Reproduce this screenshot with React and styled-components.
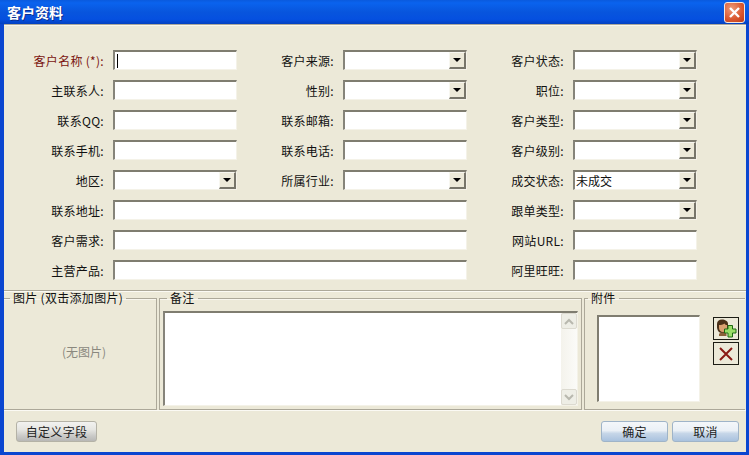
import styled, { createGlobalStyle } from "styled-components";

const GlobalStyle = createGlobalStyle`
  html, body { margin: 0; padding: 0; background: #ece9d8; }
  body { font-family: "Noto Sans CJK SC", "Liberation Sans", sans-serif; font-size: 12px; color: #222; }
`;

const Ventana = styled.div`
  width: 749px;
  height: 455px;
  box-sizing: border-box;
  display: flex;
  flex-direction: column;
  background: #0a46d0;
  padding: 0 3px 3px 4px;
  overflow: hidden;
`;

const BarraTitulo = styled.div`
  height: 24px;
  margin: 0 -3px 0 -4px;
  padding: 0 4px 0 7px;
  flex: none;
  display: flex;
  align-items: center;
  justify-content: space-between;
  background: linear-gradient(#0a5ade 0%, #0a63ee 12%, #0855dd 50%, #0550e0 80%, #0340c0 100%);
  color: #fff;
  font-weight: 700;
  font-size: 14px;
  text-shadow: 1px 1px 0 #0a2f90;
`;

const Cerrar = styled.div`
  width: 21px;
  height: 21px;
  border: 1px solid #f4e8e0;
  border-radius: 3px;
  box-sizing: border-box;
  background: radial-gradient(circle at 35% 30%, #ee9a78, #d9562e 60%, #b93a18);
  display: flex;
  align-items: center;
  justify-content: center;
`;

const Cliente = styled.div`
  flex: 1;
  display: flex;
  flex-direction: column;
  background: #ece9d8;
  border-top: 1px solid #aca899;
  box-shadow: inset 0 1px 0 #f8f6ee;
`;

const Formulario = styled.div`
  height: 266px;
  flex: none;
  box-sizing: border-box;
  padding-top: 25px;
  display: grid;
  grid-template-columns: 109px 124px 106px 124px 106px 124px;
  grid-auto-rows: 20px;
  row-gap: 10px;
  border-bottom: 1px solid #aca899;
  box-shadow: 0 1px 0 #fbfaf4;
`;

const Etiqueta = styled.label`
  display: flex;
  align-items: center;
  justify-content: flex-end;
  padding-right: 9px;
  color: ${(p) => (p.$requerido ? "#7a1410" : "#111")};
  font-size: 12px;
  white-space: pre;
  letter-spacing: 0.3px;
`;

const Hundido = styled.div`
  box-sizing: border-box;
  height: 20px;
  background: #fff;
  border-style: solid;
  border-width: 2px 1px 1px 2px;
  border-color: #7f7d70 #f4f2e8 #f4f2e8 #86847a;
  display: flex;
  align-items: center;
  grid-column: ${(p) => (p.$ancho ? "span 3" : "auto")};
  padding-left: 1px;
  font-size: 12px;
  color: #111;
`;

const Cursor = styled.span`
  width: 1px;
  height: 14px;
  margin-left: 1px;
  background: #000;
`;

const TextoSelect = styled.span`
  flex: 1;
  line-height: 14px;
`;

const Flecha = styled.span`
  width: 17px;
  height: 17px;
  flex: none;
  box-sizing: border-box;
  background: #ece9d8;
  border-style: solid;
  border-width: 1px 2px 2px 1px;
  border-color: #f8f7f0 #77756a #77756a #f8f7f0;
  display: flex;
  align-items: center;
  justify-content: center;
  &::after {
    content: "";
    border-style: solid;
    border-width: 4px 4px 0;
    border-color: #000 transparent transparent;
  }
`;

const Inferior = styled.div`
  height: 119px;
  flex: none;
  display: flex;
  gap: 2px;
`;

const Grupo = styled.fieldset`
  margin: 0;
  padding: 0;
  width: ${(p) => p.$w}px;
  box-sizing: border-box;
  flex: none;
  border: 1px solid #aca899;
  border-left-width: ${(p) => (p.$sinIzq ? 0 : 1)}px;
  border-right-width: ${(p) => (p.$sinDer ? 0 : 1)}px;
  display: flex;
  box-shadow: inset 0 1px 0 #f8f6ee;
`;

const Leyenda = styled.legend`
  margin-left: ${(p) => p.$m}px;
  padding: 0 3px;
  font-size: 12px;
  line-height: 14px;
  color: #111;
  white-space: pre;
  letter-spacing: 0.3px;
`;

const SinImagen = styled.div`
  flex: 1;
  display: flex;
  align-items: center;
  justify-content: center;
  color: #8a887e;
  padding: 0 0 11px 8px;
`;

const AreaNota = styled.div`
  flex: 1;
  margin: 6px 3px 3px 3px;
  display: flex;
  background: #fff;
  border-style: solid;
  border-width: 2px 1px 1px 2px;
  border-color: #7f7d70 #f4f2e8 #f4f2e8 #86847a;
`;

const Texto = styled.div`
  flex: 1;
`;

const BarraScroll = styled.div`
  width: 16px;
  display: flex;
  flex-direction: column;
  justify-content: space-between;
  background: linear-gradient(90deg, #f4f3ec, #fbfbf8);
`;

const BotonScroll = styled.div`
  width: 16px;
  height: 16px;
  box-sizing: border-box;
  border: 1px solid #dcdad0;
  border-radius: 2px;
  background: #eeeee6;
  display: flex;
  align-items: center;
  justify-content: center;
`;

const CuerpoAdjunto = styled.div`
  flex: 1;
  display: flex;
  padding: 10px 6px 0 12px;
  gap: 13px;
`;

const ListaAdjunto = styled.div`
  width: 103px;
  height: 87px;
  box-sizing: border-box;
  background: #fff;
  border-style: solid;
  border-width: 2px 1px 1px 2px;
  border-color: #7f7d70 #f4f2e8 #f4f2e8 #7f7d70;
`;

const PilaIconos = styled.div`
  display: flex;
  flex-direction: column;
  gap: 2px;
  padding-top: 2px;
`;

const BotonIcono = styled.div`
  width: 26px;
  height: 23px;
  box-sizing: border-box;
  border: 1px solid #1c1c14;
  display: flex;
  align-items: center;
  justify-content: center;
  background: #ece9d8;
`;

const Pie = styled.div`
  flex: 1;
  display: flex;
  align-items: center;
  justify-content: space-between;
  padding: 0 7px 0 12px;
  box-shadow: inset 0 1px 0 #fbfaf4;
`;

const Acciones = styled.div`
  display: flex;
  gap: 4px;
`;

const Boton = styled.div`
  box-sizing: border-box;
  width: ${(p) => p.$w}px;
  height: 21px;
  display: flex;
  align-items: center;
  justify-content: center;
  border: 1px solid ${(p) => (p.$azul ? "#9fb4c8" : "#b4b2a6")};
  border-radius: 3px;
  font-size: 12px;
  letter-spacing: 0.3px;
  color: #222;
  background: ${(p) =>
    p.$azul
      ? "linear-gradient(#f4f7fa 0%, #eaf0f6 45%, #c6d6e8 60%, #a9c2de 100%)"
      : "linear-gradient(#f2f2f0 0%, #e6e6e2 40%, #c8c8c6 75%, #b8b8b6 100%)"};
`;

const filas = [
  [
    { t: "客户名称 (*):", requerido: true, cursor: true },
    { t: "客户来源:", select: true },
    { t: "客户状态:", select: true },
  ],
  [
    { t: "主联系人:" },
    { t: "性别:", select: true },
    { t: "职位:", select: true },
  ],
  [{ t: "联系QQ:" }, { t: "联系邮箱:" }, { t: "客户类型:", select: true }],
  [{ t: "联系手机:" }, { t: "联系电话:" }, { t: "客户级别:", select: true }],
  [
    { t: "地区:", select: true },
    { t: "所属行业:", select: true },
    { t: "成交状态:", select: true, valor: "未成交" },
  ],
  [{ t: "联系地址:", ancho: true }, { t: "跟单类型:", select: true }],
  [{ t: "客户需求:", ancho: true }, { t: "网站URL:" }],
  [{ t: "主营产品:", ancho: true }, { t: "阿里旺旺:" }],
];

const IconoPersona = () => (
  <svg width="21" height="19" viewBox="0 0 21 19">
    <path d="M1 5c0-3 2-4.500 5-4.500s6 1.500 6 4.500v5c0 2-1.500 4-3.500 4h-3C3 14 1 11 1 8z" fill="#4a3018" />
    <path d="M3 6c2 0 4-.5 5.500-1.500.5 1 1.500 1.500 2.500 1.500v3c0 2-1.500 4-4 4S3 11 3 9z" fill="#d9a070" />
    <path d="M3 15c1-1 2-1.500 4-1.500s3 .5 3.500 1V17H3z" fill="#8a6038" />
    <path d="M12 6.500h4.500V10H20v4h-3.500v4H12v-4H8.500v-4H12z" fill="#9ade68" stroke="#1f6a12" strokeWidth="1" />
  </svg>
);

const IconoX = () => (
  <svg width="14" height="14" viewBox="0 0 14 14">
    <path d="M1 1l12 12M13 1L1 13" stroke="#8a1a14" strokeWidth="2" fill="none" />
  </svg>
);

const Chevron = ({ arriba }) => (
  <svg width="10" height="7" viewBox="0 0 10 7">
    <path d={arriba ? "M1 6l4-4 4 4" : "M1 1l4 4 4-4"} stroke="#b8b8ae" strokeWidth="2" fill="none" />
  </svg>
);

const Campo = ({ c }) => (
  <>
    <Etiqueta $requerido={c.requerido}>{c.t}</Etiqueta>
    <Hundido $ancho={c.ancho}>
      {c.cursor && <Cursor />}
      {c.select && <TextoSelect>{c.valor}</TextoSelect>}
      {c.select && <Flecha />}
    </Hundido>
  </>
);

const App = () => {
  return (
    <>
      <GlobalStyle />
      <Ventana>
        <BarraTitulo>
          <span>客户资料</span>
          <Cerrar>
            <svg width="13" height="13" viewBox="0 0 13 13">
              <path d="M2 2l9 9M11 2l-9 9" stroke="#fff" strokeWidth="2.400" fill="none" />
            </svg>
          </Cerrar>
        </BarraTitulo>
        <Cliente>
          <Formulario>
            {filas.flat().map((c) => (
              <Campo key={c.t} c={c} />
            ))}
          </Formulario>
          <Inferior>
            <Grupo $w={153} $sinIzq>
              <Leyenda $m={6}>图片 (双击添加图片)</Leyenda>
              <SinImagen>(无图片)</SinImagen>
            </Grupo>
            <Grupo $w={423}>
              <Leyenda $m={7}>备注</Leyenda>
              <AreaNota>
                <Texto />
                <BarraScroll>
                  <BotonScroll>
                    <Chevron arriba />
                  </BotonScroll>
                  <BotonScroll>
                    <Chevron />
                  </BotonScroll>
                </BarraScroll>
              </AreaNota>
            </Grupo>
            <Grupo $w={161} $sinDer>
              <Leyenda $m={3}>附件</Leyenda>
              <CuerpoAdjunto>
                <ListaAdjunto />
                <PilaIconos>
                  <BotonIcono>
                    <IconoPersona />
                  </BotonIcono>
                  <BotonIcono>
                    <IconoX />
                  </BotonIcono>
                </PilaIconos>
              </CuerpoAdjunto>
            </Grupo>
          </Inferior>
          <Pie>
            <Boton $w={81}>自定义字段</Boton>
            <Acciones>
              <Boton $w={67} $azul>
                确定
              </Boton>
              <Boton $w={67} $azul>
                取消
              </Boton>
            </Acciones>
          </Pie>
        </Cliente>
      </Ventana>
    </>
  );
};

export default App;
